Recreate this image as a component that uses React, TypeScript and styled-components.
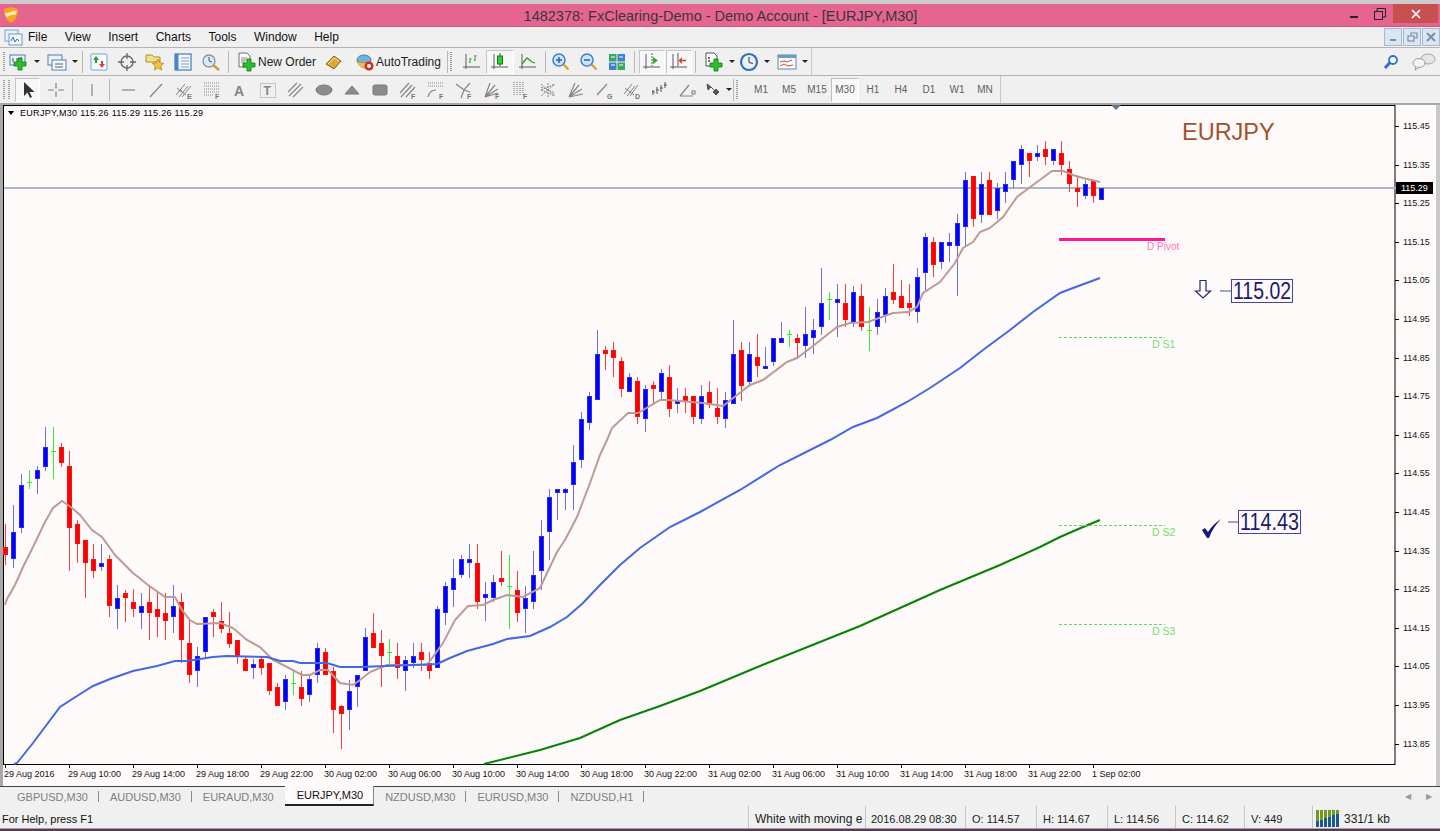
import React from "react";
import styled, { createGlobalStyle } from "styled-components";

const GlobalStyle = createGlobalStyle`
  html, body { margin: 0; padding: 0; background: #f0f0f0; overflow: hidden; }
  body { font-family: "Liberation Sans", Arial, sans-serif; font-size: 12px; color: #000; }
`;

const Window = styled.div`
  width: 1440px;
  height: 831px;
  display: flex;
  flex-direction: column;
  overflow: hidden;
`;
const TitleBar = styled.div`
  height: 22px;
  border-top: 4px solid #cccccc;
  border-bottom: 1px solid #c9577f;
  background: #e5658f;
  display: grid;
  grid-template-columns: 1fr auto 1fr;
  align-items: center;
  padding-left: 3px;
`;
const TitleText = styled.div`
  font-size: 14.5px;
  color: #3b3344;
  padding-top: 1px;
  margin-right: 2px;
`;
const WinControls = styled.div`
  justify-self: end;
  display: flex;
  align-items: flex-start;
  height: 22px;
  margin-right: 2px;
`;
const WinBtn = styled.div<{ $w: number; $close?: boolean }>`
  width: ${(p) => p.$w}px;
  height: 19px;
  background: ${(p) => (p.$close ? "#c75050" : "transparent")};
  display: flex;
  align-items: center;
  justify-content: center;
`;
const MenuBar = styled.div`
  height: 20px;
  display: flex;
  align-items: center;
  background: #f0f0f0;
  padding-left: 4px;
`;
const MenuItems = styled.div`
  display: flex;
  gap: 17.5px;
  margin-left: 4px;
  color: #111;
`;
const MdiGroup = styled.div`
  margin-left: auto;
  display: flex;
  gap: 1px;
`;
const MdiBtn = styled.div`
  width: 16px;
  height: 16px;
  border: 1px solid #a6bacb;
  background: #d9e7f4;
  display: flex;
  align-items: center;
  justify-content: center;
`;
const ToolRow = styled.div<{ $h: number }>`
  height: ${(p) => p.$h}px;
  box-sizing: border-box;
  border-top: 1px solid #b4b4b4;
  background: #f0f0f0;
  display: flex;
  align-items: center;
  padding-left: 3px;
  position: relative;
`;
const Grip = styled.div<{ $ml?: number; $mr?: number }>`
  width: 2px;
  height: 20px;
  flex: none;
  margin-left: ${(p) => p.$ml ?? 0}px;
  margin-right: ${(p) => p.$mr ?? 0}px;
  background: repeating-linear-gradient(to bottom, #9a9a9a 0 1px, #f0f0f0 1px 2px);
`;
const Sep = styled.div<{ $ml?: number; $mr?: number }>`
  width: 1px;
  height: 22px;
  background: #b8b8b8;
  margin-left: ${(p) => p.$ml ?? 0}px;
  margin-right: ${(p) => p.$mr ?? 0}px;
  flex: none;
`;
const Tool = styled.div<{ $w?: number; $ml?: number; $active?: boolean }>`
  width: ${(p) => p.$w ?? 28}px;
  height: 24px;
  box-sizing: border-box;
  margin-left: ${(p) => p.$ml ?? 0}px;
  flex: none;
  display: flex;
  align-items: center;
  justify-content: center;
  gap: 2px;
  font-size: 12px;
  color: #222;
  border: 1px solid ${(p) => (p.$active ? "#c4c4c4" : "transparent")};
  border-right-color: ${(p) => (p.$active ? "#ffffff" : "transparent")};
  border-bottom-color: ${(p) => (p.$active ? "#ffffff" : "transparent")};
  background: ${(p) => (p.$active ? "#f7f7f7" : "transparent")};
`;
const Caret = styled.span`
  width: 0;
  height: 0;
  margin-left: 3px;
  border-left: 3px solid transparent;
  border-right: 3px solid transparent;
  border-top: 3px solid #222;
`;
const RowEnd = styled.div<{ $at: number }>`
  position: absolute;
  left: ${(p) => p.$at}px;
  top: 0;
  bottom: 0;
  width: 1px;
  background: #c8c8c8;
`;
const RightTools = styled.div`
  margin-left: auto;
  display: flex;
  align-items: center;
  gap: 14px;
  margin-right: 4px;
`;
const Period = styled.div<{ $active?: boolean }>`
  width: 28px;
  height: 24px;
  flex: none;
  box-sizing: border-box;
  display: flex;
  align-items: center;
  justify-content: center;
  font-size: 10px;
  color: #606060;
  border: 1px solid ${(p) => (p.$active ? "#bcbcbc" : "transparent")};
  border-right-color: ${(p) => (p.$active ? "#fff" : "transparent")};
  border-bottom-color: ${(p) => (p.$active ? "#fff" : "transparent")};
  background: ${(p) => (p.$active ? "#f8f8f8" : "transparent")};
`;
const ChartPane = styled.div`
  height: 683px;
  flex: none;
  background: #fffafa;
  border-top: 2px solid #a8a8a8;
  box-sizing: border-box;
`;
const ChartSvg = styled.svg`
  display: block;
  font-family: "Liberation Sans", Arial, sans-serif;
`;
const IcoSvg = styled.svg`
  flex: none;
`;
const TabBar = styled.div`
  height: 20px;
  box-sizing: border-box;
  display: flex;
  align-items: stretch;
  padding-left: 6px;
  background: #f0f0f0;
  border-top: 1px solid #444;
`;
const Tab = styled.div<{ $active?: boolean; $sep?: boolean }>`
  display: flex;
  align-items: center;
  padding: ${(p) => (p.$active ? "0 10px 0 12px" : "0 11px")};
  font-size: 11px;
  color: ${(p) => (p.$active ? "#111" : "#7e7e7e")};
  background: ${(p) => (p.$active ? "#fffafa" : "transparent")};
  margin-top: ${(p) => (p.$active ? "-1px" : "0")};
  border-bottom: ${(p) => (p.$active ? "2px solid #222" : "none")};
  border-right: ${(p) => (p.$active ? "1px solid #888" : "none")};
  position: relative;
  ${(p) =>
    p.$sep &&
    `&::after { content: ""; position: absolute; right: 0; top: 4px; bottom: 4px; width: 1px; background: #8a8a8a; }`}
`;
const TabArrows = styled.div`
  margin-left: auto;
  display: flex;
  align-items: center;
  gap: 15px;
  padding-right: 8px;
  font-size: 8px;
  color: #9a9a9a;
`;
const StatusBar = styled.div`
  height: 22px;
  flex: none;
  display: flex;
  align-items: stretch;
  background: #f0f0f0;
  font-size: 11px;
  color: #222;
`;
const HelpText = styled.div`
  width: 748px;
  padding: 3px 0 0 2px;
  box-sizing: border-box;
  color: #111;
  display: flex;
  align-items: center;
`;
const Cell = styled.div<{ $w: number; $pad?: number; $fs?: number }>`
  width: ${(p) => p.$w}px;
  box-sizing: border-box;
  flex: none;
  display: flex;
  align-items: center;
  gap: 4px;
  padding-top: 3px;
  padding-left: ${(p) => p.$pad ?? 6}px;
  font-size: ${(p) => p.$fs ?? 11}px;
  border-left: 1px solid #c4c4c4;
  white-space: nowrap;
`;
const BottomEdge = styled.div`
  height: 3px;
  background: linear-gradient(to bottom, #d08fa6 0 1px, #4a4050 1px);
`;

// hi, body top, body bottom, lo (pixel rows), kind: b blue, r red, g green doji
type Candle = [number, number, number, number, "b" | "r" | "g"];
const candles: Candle[] = [
  [524, 547, 555, 565, "r"], [505, 532, 559, 568, "b"], [474, 485, 528, 533, "b"], [470, 482, 482, 489, "g"],
  [466, 470, 479, 494, "b"], [427, 447, 467, 471, "b"], [427, 451, 451, 479, "g"], [443, 447, 463, 467, "r"],
  [451, 466, 528, 571, "r"], [520, 524, 544, 563, "r"], [540, 540, 563, 598, "r"], [544, 559, 571, 578, "r"],
  [544, 563, 567, 571, "b"], [555, 559, 606, 617, "r"], [585, 598, 609, 629, "b"], [590, 593, 598, 622, "r"],
  [589, 602, 609, 617, "r"], [593, 606, 613, 629, "b"], [585, 602, 613, 640, "r"], [593, 609, 617, 637, "r"],
  [593, 613, 621, 640, "r"], [585, 606, 617, 633, "b"], [593, 602, 640, 663, "r"], [620, 643, 675, 683, "r"],
  [647, 656, 671, 687, "b"], [617, 617, 652, 657, "b"], [609, 612, 617, 637, "r"], [602, 621, 629, 633, "r"],
  [612, 633, 644, 648, "r"], [640, 640, 656, 664, "r"], [656, 659, 671, 671, "r"], [659, 664, 668, 679, "b"],
  [656, 659, 668, 675, "r"], [663, 663, 691, 695, "r"], [683, 687, 706, 706, "r"], [675, 679, 702, 710, "b"],
  [671, 683, 683, 695, "g"], [671, 687, 699, 706, "r"], [675, 679, 695, 702, "b"], [643, 648, 675, 683, "b"],
  [648, 652, 675, 675, "r"], [667, 671, 710, 733, "r"], [705, 706, 714, 749, "r"], [680, 691, 710, 730, "b"],
  [675, 675, 687, 707, "b"], [628, 637, 671, 671, "b"], [613, 633, 648, 648, "r"], [630, 643, 656, 687, "r"],
  [639, 652, 652, 664, "g"], [643, 656, 668, 679, "r"], [656, 660, 671, 691, "b"], [643, 656, 663, 668, "b"],
  [643, 652, 660, 671, "r"], [652, 663, 671, 679, "r"], [606, 609, 668, 668, "b"], [582, 586, 613, 625, "b"],
  [559, 578, 590, 607, "b"], [555, 559, 575, 578, "b"], [544, 559, 563, 578, "b"], [544, 563, 602, 609, "r"],
  [582, 594, 598, 621, "b"], [575, 582, 598, 602, "b"], [551, 578, 582, 586, "r"], [555, 586, 586, 629, "g"],
  [571, 590, 613, 622, "r"], [586, 598, 609, 633, "b"], [551, 575, 602, 609, "b"], [520, 536, 571, 590, "b"],
  [489, 497, 532, 560, "b"], [489, 489, 493, 520, "b"], [488, 489, 493, 510, "b"], [445, 462, 485, 510, "b"],
  [412, 419, 460, 468, "b"], [392, 396, 423, 430, "b"], [330, 354, 400, 400, "b"], [346, 350, 354, 370, "r"],
  [342, 350, 358, 377, "r"], [357, 361, 389, 397, "r"], [373, 377, 392, 392, "b"], [377, 381, 417, 424, "r"],
  [385, 389, 419, 432, "b"], [381, 385, 389, 405, "r"], [369, 373, 392, 400, "b"], [365, 377, 409, 417, "r"],
  [388, 400, 404, 413, "b"], [388, 396, 401, 413, "r"], [396, 396, 417, 424, "r"], [385, 396, 419, 424, "b"],
  [381, 392, 405, 408, "r"], [388, 408, 417, 424, "r"], [392, 400, 419, 428, "b"], [320, 354, 404, 404, "b"],
  [342, 350, 386, 401, "r"], [342, 354, 382, 386, "b"], [334, 357, 366, 377, "r"], [347, 366, 369, 369, "b"],
  [338, 338, 362, 366, "b"], [322, 338, 343, 343, "b"], [330, 334, 334, 347, "g"], [334, 338, 343, 358, "r"],
  [307, 334, 346, 358, "b"], [319, 330, 338, 354, "b"], [268, 303, 327, 335, "b"], [292, 299, 299, 320, "g"],
  [284, 299, 303, 337, "b"], [284, 303, 320, 327, "r"], [286, 292, 323, 327, "b"], [284, 296, 327, 331, "r"],
  [307, 330, 330, 351, "g"], [299, 312, 327, 335, "b"], [288, 296, 315, 323, "b"], [264, 292, 300, 304, "r"],
  [280, 296, 308, 308, "r"], [284, 303, 308, 316, "r"], [268, 277, 312, 323, "b"], [233, 237, 273, 292, "b"],
  [237, 242, 265, 277, "r"], [242, 242, 262, 269, "b"], [233, 242, 246, 262, "b"], [214, 223, 246, 296, "b"],
  [172, 180, 227, 247, "b"], [176, 176, 219, 227, "r"], [172, 184, 215, 223, "b"], [172, 180, 215, 215, "r"],
  [183, 188, 211, 219, "b"], [172, 184, 192, 203, "b"], [161, 161, 180, 188, "b"], [145, 149, 165, 184, "b"],
  [153, 153, 161, 177, "r"], [145, 153, 157, 161, "b"], [141, 149, 157, 165, "r"], [149, 149, 161, 165, "b"],
  [141, 153, 165, 175, "r"], [161, 169, 184, 192, "r"], [177, 188, 192, 207, "r"], [180, 184, 196, 199, "b"],
  [180, 180, 196, 203, "r"], [188, 188, 200, 200, "b"],
];

const brownMa = "5,605 7,599 15,585 23,567 33,547 45,522 53,508 62,501 72,508 80,515 92,530 102,537 115,555 133,573 148,585 165,597 175,597 182,610 190,620 197,624 220,623 233,628 247,640 260,647 273,660 287,667 302,675 310,675 320,670 328,670 340,683 353,685 360,680 370,672 387,665 427,665 443,643 455,620 468,606 483,605 493,600 507,595 523,597 540,588 557,552 565,540 577,517 590,483 600,455 607,440 612,428 628,413 638,413 660,400 668,400 703,403 723,406 750,385 763,380 787,362 797,358 813,346 837,327 850,323 868,322 893,313 908,312 917,307 923,293 940,282 955,263 963,248 973,242 980,232 990,228 1003,217 1017,197 1037,182 1052,171 1063,171 1073,175 1083,178 1100,182";
const blueMa = "14,764 17,763 33,743 60,707 77,696 93,686 110,679 133,671 157,666 175,661 187,661 213,657 227,656 267,657 280,661 293,661 300,663 327,663 340,667 360,667 437,664 450,658 467,651 493,644 507,639 530,636 550,627 567,617 583,603 600,585 620,565 640,548 670,527 700,512 740,490 780,465 830,440 853,427 877,418 907,402 930,388 960,368 983,350 1010,330 1033,312 1060,293 1073,288 1100,278";
const greenMa = "484,764 540,750 580,738 620,720 660,706 700,691 760,666 800,650 860,626 900,608 940,590 1000,565 1040,547 1060,537 1083,527 1100,520";

const dates = [
  "29 Aug 2016", "29 Aug 10:00", "29 Aug 14:00", "29 Aug 18:00", "29 Aug 22:00", "30 Aug 02:00",
  "30 Aug 06:00", "30 Aug 10:00", "30 Aug 14:00", "30 Aug 18:00", "30 Aug 22:00", "31 Aug 02:00",
  "31 Aug 06:00", "31 Aug 10:00", "31 Aug 14:00", "31 Aug 18:00", "31 Aug 22:00", "1 Sep 02:00",
];
const prices = Array.from({ length: 17 }, (_, i) => (115.45 - i * 0.1).toFixed(2));

const levels = [
  { y: 337.5, label: "D S1", tx: 1152, ty: 348 },
  { y: 525.5, label: "D S2", tx: 1152, ty: 536 },
  { y: 624.5, label: "D S3", tx: 1152, ty: 635 },
];

const FRAME_R = 1395;
const FRAME_B = 764;

function CandleMark({ c, x }: { c: Candle; x: number }) {
  const [hi, top, bot, lo, kind] = c;
  if (kind === "g") {
    return (
      <g fill="#33ee33">
        <rect x={x} y={hi} width={1} height={lo - hi} />
        <rect x={x - 2} y={top} width={5} height={1} />
      </g>
    );
  }
  const wick = kind === "b" ? "#7070dc" : "#ff3a3a";
  const edge = kind === "b" ? "#2a2af5" : "#ff1010";
  const fill = kind === "b" ? "#0000ff" : "#ff0000";
  return (
    <g>
      <rect x={x} y={hi} width={1} height={lo - hi} fill={wick} />
      <rect x={x - 2} y={top} width={5} height={Math.max(bot - top, 3)} fill={edge} />
      <rect x={x - 1} y={top + 1} width={3} height={Math.max(bot - top - 2, 1)} fill={fill} />
    </g>
  );
}

function Chart() {
  return (
    <ChartSvg width={1440} height={681} viewBox="0 105 1440 681">
      <rect x={0} y={105} width={3} height={681} fill="#a8a8a8" />
      <rect x={1436} y={105} width={4} height={681} fill="#c8c8c8" />
      <rect x={3.5} y={105.5} width={FRAME_R - 3.5} height={FRAME_B - 105} fill="none" stroke="#000" />

      <g shapeRendering="crispEdges">
        <rect x={4} y={187} width={1392} height={2} fill="#aeb4c8" />
        {candles.map((c, i) => (
          <CandleMark key={i} c={c} x={5 + i * 8} />
        ))}
      </g>

      <polyline points={brownMa} fill="none" stroke="#bd9a94" strokeWidth={2} />
      <polyline points={blueMa} fill="none" stroke="#4169e1" strokeWidth={2} />
      <polyline points={greenMa} fill="none" stroke="#068206" strokeWidth={2} />

      <path d="M8 111h6l-3 4z" fill="#000" />
      <text x={20} y={116} fontSize={9} fill="#000" textLength={183}>EURJPY,M30  115.26 115.29 115.26 115.29</text>
      <path d="M1111 105h10l-5 5z" fill="#5f7489" />
      <text x={1182} y={140} fontSize={23.5} fill="#a0522d">EURJPY</text>

      <rect x={1059} y={238} width={106} height={3} fill="#ff1493" />
      <text x={1147} y={250} fontSize={10} fill="#ff78b4">D Pivot</text>
      {levels.map((l) => (
        <g key={l.label}>
          <line x1={1059} x2={1165} y1={l.y} y2={l.y} stroke="#55dd55" strokeDasharray="3 2" />
          <text x={l.tx} y={l.ty} fontSize={10.5} fill="#6fe06f">{l.label}</text>
        </g>
      ))}

      <path d="M1200 280.5h6v10.5h4.5l-7.5 7-7.5-7h4.5z" fill="#fffafa" stroke="#1c2a6e" strokeWidth={1.2} />
      <line x1={1220} x2={1231} y1={291} y2={291} stroke="#4a4a90" />
      <rect x={1231.5} y={279.5} width={61} height={23} fill="none" stroke="#3f47a5" />
      <text x={1233} y={299} fontSize={23} fill="#191970" textLength={58} lengthAdjust="spacingAndGlyphs">115.02</text>

      <path d="M1202 530l3-2 3 4c3-5 7-9 13-13-5 5-9 11-12 19h-2z" fill="#191970" />
      <line x1={1228} x2={1238} y1={522} y2={522} stroke="#4a4a90" />
      <rect x={1238.5} y={510.5} width={62} height={23} fill="none" stroke="#3f47a5" />
      <text x={1240} y={530} fontSize={23} fill="#191970" textLength={59} lengthAdjust="spacingAndGlyphs">114.43</text>

      <g fontSize={9} fill="#111">
        {prices.map((p, i) => {
          const y = Math.round(126 + i * 38.6);
          return (
            <g key={p}>
              <rect x={FRAME_R} y={y} width={4} height={1} fill="#000" />
              <text x={1403} y={y + 3}>{p}</text>
            </g>
          );
        })}
        {dates.map((d, i) => {
          const x = 5 + i * 64;
          return (
            <g key={d}>
              <rect x={x} y={FRAME_B} width={1} height={4} fill="#000" />
              <text x={x - 1} y={777}>{d}</text>
            </g>
          );
        })}
      </g>
      <rect x={1396} y={182} width={37} height={12} fill="#000" />
      <text x={1401} y={191} fontSize={9} fill="#fff">115.29</text>
    </ChartSvg>
  );
}

const Ico = ({ w = 20, h = 20, children }: { w?: number; h?: number; children: React.ReactNode }) => (
  <IcoSvg width={w} height={h} viewBox={`0 0 ${w} ${h}`}>
    {children}
  </IcoSvg>
);

const Plus = ({ x, y }: { x: number; y: number }) => (
  <path
    d={`M${x} ${y - 6}h4v4h4v4h-4v4h-4v-4h-4v-4h4z`}
    fill="#29c229"
    stroke="#0c7a0c"
    strokeWidth={0.8}
  />
);

const Logo = () => (
  <Ico w={16} h={18}>
    <path d="M1 3l7-2 7 2c0 6-2 11-7 14C3 14 1 9 1 3z" fill="#f5a623" />
    <path d="M2 7c4 1 7-3 12-2-1 2-1 3-2 4-4-1-6 2-9 2z" fill="#ffe9b0" />
  </Ico>
);

const MenuIcon = () => (
  <Ico w={20} h={18}>
    <rect x={1} y={2} width={13} height={11} fill="#e4f0fb" stroke="#7fa4c8" />
    <rect x={5} y={6} width={13} height={11} fill="#f4f9ff" stroke="#6e97c0" />
    <path d="M7 13l2-4 2 5 2-3 2 2" fill="none" stroke="#3a6ea5" />
  </Ico>
);

const drawStroke = { fill: "none", stroke: "#858585", strokeWidth: 1.2 };
const SubF = ({ t = "F", x = 13 }: { t?: string; x?: number }) => (
  <text x={x} y={19} fontSize={7} fontWeight={700} fill="#777" fontFamily="Liberation Sans">{t}</text>
);

const drawIcons: React.ReactNode[] = [
  <path key="h" d="M4 10H17" {...drawStroke} />,
  <path key="t" d="M4 17L16 4" {...drawStroke} />,
  <g key="e">
    <path d="M2 15L11 4M5 17L14 6M8 17L17 6M3 8l9 7M4 12l4-2" {...drawStroke} strokeWidth={1} />
    <SubF t="E" />
  </g>,
  <g key="f">
    <path d="M2 3H17M2 6H17M2 9H17M2 12H17M2 15H12" {...drawStroke} strokeDasharray="1 1" />
    <SubF />
  </g>,
  <text key="a" x={4} y={16} fontSize={14} fontWeight={700} fill="#858585" fontFamily="Liberation Sans">A</text>,
  <g key="b">
    <rect x={2.5} y={3.5} width={15} height={14} fill="none" stroke="#999" strokeDasharray="1 1" />
    <text x={5.5} y={15} fontSize={12} fontWeight={700} fill="#858585" fontFamily="Liberation Sans">T</text>
  </g>,
  <path key="p" d="M2 12L11 3M3 16L15 4M7 17L17 7" {...drawStroke} />,
  <ellipse key="el" cx={10} cy={10} rx={8} ry={5} fill="#8c8c8c" stroke="#777" />,
  <path key="tr" d="M3 14L10 6L17 14Z" fill="#8c8c8c" stroke="#777" />,
  <rect key="re" x={3} y={5} width={14} height={10} rx={2} fill="#8c8c8c" stroke="#777" />,
  <g key="f2">
    <path d="M2 13L11 3M3 17L14 5M8 17L17 7" {...drawStroke} />
    <SubF />
  </g>,
  <g key="f3">
    <path d="M2 3H17M2 6H17" {...drawStroke} strokeDasharray="1 1" />
    <path d="M2 17c1-5 4-7 8-7" {...drawStroke} />
    <SubF />
  </g>,
  <g key="f4">
    <path d="M2 4l8 6 6-7M10 10l-3 8M10 10l6 2" {...drawStroke} />
    <SubF />
  </g>,
  <g key="f5">
    <path d="M3 17L8 3M3 17L13 5M3 17L16 9M3 17L16 13" {...drawStroke} />
    <SubF />
  </g>,
  <g key="f6">
    <path d="M4 2v13M7 2v13M10 2v13M13 2v13" {...drawStroke} strokeDasharray="1 1" />
    <SubF />
  </g>,
  <path key="x" d="M3 4l14 12M3 10l14-6M3 10l14 6M3 16L17 4M10 3v14M3 7l14 6" {...drawStroke} strokeWidth={1} strokeDasharray="2 1" />,
  <path key="fan" d="M3 17L9 3M3 17L13 5M3 17L16 9M3 17L17 14" {...drawStroke} />,
  <g key="g">
    <path d="M3 15L13 4" {...drawStroke} />
    <SubF t="G" />
  </g>,
  <g key="d">
    <path d="M2 14L10 4M5 16L13 6M8 16L16 5M3 8l9 7" {...drawStroke} strokeWidth={1} />
    <SubF t="D" />
  </g>,
  <path key="pf" d="M3 15v-5M2 12h3M7 14v-7M6 10h3M11 12V5M10 8h3M15 8V2M14 5h3" {...drawStroke} stroke="#555" strokeWidth={1} />,
  <g key="an">
    <path d="M2 16H15M2 16L11 5" {...drawStroke} />
    <rect x={14} y={11} width={3} height={3} fill="none" stroke="#777" />
  </g>,
];

const periods = ["M1", "M5", "M15", "M30", "H1", "H4", "D1", "W1", "MN"];
const tabs = ["GBPUSD,M30", "AUDUSD,M30", "EURAUD,M30", "EURJPY,M30", "NZDUSD,M30", "EURUSD,M30", "NZDUSD,H1"];

const axes = <path d="M4 2v15M1 15h17" fill="none" stroke="#5a5a5a" strokeWidth={1} />;

export default function App() {
  return (
    <Window>
      <GlobalStyle />
      <TitleBar>
        <Logo />
        <TitleText>1482378: FxClearing-Demo - Demo Account - [EURJPY,M30]</TitleText>
        <WinControls>
          <WinBtn $w={26}>
            <svg width={10} height={10}><rect x={1} y={7} width={8} height={2} fill="#2a2030" /></svg>
          </WinBtn>
          <WinBtn $w={26}>
            <svg width={12} height={12} fill="none" stroke="#2a2030">
              <rect x={0.5} y={3.5} width={8} height={8} />
              <path d="M3 3V.5h8.5V9H9" />
            </svg>
          </WinBtn>
          <WinBtn $w={45} $close>
            <svg width={10} height={10} stroke="#fff" strokeWidth={1.6}><path d="M1 1l8 8M9 1l-8 8" /></svg>
          </WinBtn>
        </WinControls>
      </TitleBar>

      <MenuBar>
        <MenuIcon />
        <MenuItems>
          {["File", "View", "Insert", "Charts", "Tools", "Window", "Help"].map((m) => (
            <span key={m}>{m}</span>
          ))}
        </MenuItems>
        <MdiGroup>
          <MdiBtn>
            <svg width={10} height={10}><rect x={2} y={7} width={6} height={2} fill="#7b8fa0" /></svg>
          </MdiBtn>
          <MdiBtn>
            <svg width={11} height={11} fill="none" stroke="#7b8fa0" strokeWidth={1.2}>
              <rect x={1} y={4} width={6} height={5} />
              <path d="M4 3V1h6v5H8" />
            </svg>
          </MdiBtn>
          <MdiBtn>
            <svg width={10} height={10} stroke="#7b8fa0" strokeWidth={2}><path d="M1 1l8 8M9 1l-8 8" /></svg>
          </MdiBtn>
        </MdiGroup>
      </MenuBar>

      <ToolRow $h={28}>
        <Grip />
        <Tool $w={35} $ml={2}>
          <Ico w={20} h={20}>
            <rect x={1} y={3} width={15} height={10} fill="#eaf3fb" stroke="#4f7fae" />
            <path d="M4 6v4M8 6v5M12 5v3" stroke="#444" />
            <Plus x={9} y={12} />
          </Ico>
          <Caret />
        </Tool>
        <Tool $w={35} $ml={3}>
          <Ico w={20} h={20}>
            <rect x={1} y={3} width={14} height={10} fill="#eaf3fb" stroke="#4f7fae" />
            <rect x={5} y={8} width={14} height={10} fill="#f7fbff" stroke="#4f7fae" />
            <path d="M8 12h8M8 15h8" stroke="#555" />
          </Ico>
          <Caret />
        </Tool>
        <Sep $ml={2} $mr={2} />
        <Tool>
          <Ico w={18} h={18}>
            <rect x={1} y={1} width={16} height={16} rx={1} fill="#f8fbff" stroke="#6fa3d6" />
            <path d="M6 3l3 4H7v3H5V7H3z" fill="#26a326" />
            <path d="M12 15l-3-4h2V8h2v3h2z" fill="#d8452c" />
          </Ico>
        </Tool>
        <Tool>
          <Ico w={20} h={20}>
            <circle cx={10} cy={10} r={6} fill="none" stroke="#666" strokeWidth={1.3} />
            <path d="M10 1v6M10 13v6M1 10h6M13 10h6" stroke="#666" strokeWidth={1.3} />
          </Ico>
        </Tool>
        <Tool>
          <Ico w={20} h={20}>
            <path d="M1 3h6l2 2h6v5H1z" fill="#f6dc8e" stroke="#b08a35" />
            <path d="M13 7l1.8 3.8 4 .5-3 2.7.9 4-3.7-2-3.7 2 .9-4-3-2.7 4-.5z" fill="#f4c430" stroke="#a98112" strokeWidth={0.7} />
          </Ico>
        </Tool>
        <Tool>
          <Ico w={18} h={18}>
            <rect x={1} y={1} width={16} height={16} fill="#f4f9ff" stroke="#4a86c5" strokeWidth={1.3} />
            <rect x={1} y={1} width={3.5} height={16} fill="#4a86c5" />
            <path d="M7 5h8M7 8h8M7 11h8M7 14h8" stroke="#7a9cc0" />
          </Ico>
        </Tool>
        <Tool>
          <Ico w={20} h={20}>
            <circle cx={8} cy={9} r={6} fill="#dde9f5" stroke="#7e97b2" strokeWidth={1.3} />
            <path d="M8 5v4l3 1" fill="none" stroke="#555" />
            <path d="M12 13l6 5" stroke="#c89b3c" strokeWidth={2.4} />
          </Ico>
        </Tool>
        <Sep $ml={3} $mr={3} />
        <Tool $w={88}>
          <Ico w={20} h={20}>
            <path d="M3 1h8l3 3v11H3z" fill="#fbfbfb" stroke="#707070" />
            <path d="M5 6h6M5 8h6M5 10h4" stroke="#888" />
            <Plus x={11} y={13} />
          </Ico>
          <span>New Order</span>
        </Tool>
        <Tool>
          <Ico w={20} h={20}>
            <path d="M2 12l8-8 7 5-7 8z" fill="#dca73a" stroke="#8a6415" />
            <path d="M4 12l6-6 5 3" fill="none" stroke="#f8e2a2" />
          </Ico>
        </Tool>
        <Tool $w={91} $ml={5}>
          <Ico w={18} h={20}>
            <ellipse cx={8} cy={8} rx={7} ry={5} fill="#6fb2dc" stroke="#4a7fa6" />
            <path d="M1 9c2 5 5 7 8 7l3-6c-4 1-8 1-11-1z" fill="#efc24a" stroke="#a57f1a" strokeWidth={0.6} />
            <circle cx={13} cy={14} r={4.5} fill="#d22a1d" />
            <circle cx={13} cy={14} r={2} fill="#fff" />
          </Ico>
          <span>AutoTrading</span>
        </Tool>
        <Sep $ml={3} />
        <Grip $ml={2} />
        <Tool $ml={6}>
          <Ico>
            {axes}
            <path d="M8 11V6M7 10h1M8 7h1.5M13 9V3M12 8h1M13 4h1.5" stroke="#2e9b2e" fill="none" />
          </Ico>
        </Tool>
        <Tool $active>
          <Ico>
            {axes}
            <path d="M10 1v13" stroke="#444" />
            <rect x={7.5} y={4} width={5} height={8} fill="#30d030" stroke="#177a17" />
          </Ico>
        </Tool>
        <Tool>
          <Ico>
            {axes}
            <path d="M4 12l5-6 5 4 3 1" fill="none" stroke="#2e9b2e" strokeWidth={1.3} />
          </Ico>
        </Tool>
        <Sep $ml={3} />
        <Tool $ml={1}>
          <Ico>
            <circle cx={8} cy={8} r={6} fill="#cfe4fa" stroke="#3f7fd0" strokeWidth={1.5} />
            <path d="M5 8h6M8 5v6" stroke="#2a62b0" strokeWidth={1.5} />
            <path d="M12.5 12.5l5 5" stroke="#d8a32e" strokeWidth={2.4} />
          </Ico>
        </Tool>
        <Tool>
          <Ico>
            <circle cx={8} cy={8} r={6} fill="#cfe4fa" stroke="#3f7fd0" strokeWidth={1.5} />
            <path d="M5 8h6" stroke="#2a62b0" strokeWidth={1.5} />
            <path d="M12.5 12.5l5 5" stroke="#d8a32e" strokeWidth={2.4} />
          </Ico>
        </Tool>
        <Tool>
          <Ico w={18} h={18}>
            <rect x={1} y={1} width={7.5} height={7.5} fill="#38a85a" />
            <rect x={9.5} y={1} width={7.5} height={7.5} fill="#3d7fd8" />
            <rect x={1} y={9.5} width={7.5} height={7.5} fill="#3d7fd8" />
            <rect x={9.5} y={9.5} width={7.5} height={7.5} fill="#38a85a" />
            <path d="M3 4h4M3 12h4M11 4h4M11 12h4" stroke="#fff" strokeWidth={1.2} />
          </Ico>
        </Tool>
        <Sep $ml={3} />
        <Tool $w={26} $ml={4} $active>
          <Ico>
            {axes}
            <path d="M10 1v13" stroke="#555" strokeDasharray="2 1" />
            <path d="M11 5l5 3.5-5 3.5z" fill="#27b027" />
          </Ico>
        </Tool>
        <Tool $w={26} $ml={1} $active>
          <Ico>
            {axes}
            <path d="M9 1v13" stroke="#555" />
            <path d="M11 8.5h6M13 6l-2.5 2.5L13 11" fill="none" stroke="#c8401f" strokeWidth={1.4} />
          </Ico>
        </Tool>
        <Sep $ml={3} />
        <Tool $w={34} $ml={6}>
          <Ico w={20} h={20}>
            <path d="M2 1h8l3 3v10H2z" fill="#fafafa" stroke="#555" />
            <path d="M4 6h2M4 9h2" stroke="#444" strokeWidth={1.5} />
            <Plus x={10} y={13} />
          </Ico>
          <Caret />
        </Tool>
        <Tool $w={36}>
          <Ico w={20} h={20}>
            <circle cx={10} cy={10} r={8} fill="#e7f2fb" stroke="#2b6fb5" strokeWidth={2.2} />
            <path d="M10 5v5.5l4 1" fill="none" stroke="#333" />
          </Ico>
          <Caret />
        </Tool>
        <Tool $w={38} $ml={1}>
          <Ico w={20} h={18}>
            <rect x={1} y={2} width={18} height={14} fill="#fbfdff" stroke="#5b86ad" />
            <rect x={1} y={2} width={18} height={3} fill="#6d9bc3" />
            <path d="M3 9l4-1 3 1 5-2M3 13l4-2 4 2 5-1" fill="none" stroke="#d04a3a" />
          </Ico>
          <Caret />
        </Tool>
        <RowEnd $at={811} />
        <RightTools>
          <Ico w={15} h={16}>
            <circle cx={10} cy={6} r={4} fill="#eef5fd" stroke="#2f6fd0" strokeWidth={1.8} />
            <path d="M2 14l5-5.5" stroke="#2f6fd0" strokeWidth={3} />
          </Ico>
          <Ico w={24} h={18}>
            <ellipse cx={16} cy={6} rx={7} ry={5} fill="#e6e6e6" stroke="#a4a4a4" />
            <ellipse cx={7} cy={10} rx={6} ry={4.5} fill="#f4f4f4" stroke="#9a9a9a" />
            <path d="M4 14l-1 3 4-2.5" fill="#f4f4f4" stroke="#9a9a9a" />
          </Ico>
        </RightTools>
      </ToolRow>

      <ToolRow $h={28}>
        <Grip />
        <Grip $ml={3} />
        <Tool $w={25} $ml={5} $active>
          <Ico>
            <path d="M6 2v14l3.5-3.5 2.500 5.500 2-1-2.500-5h5z" fill="#333" />
          </Ico>
        </Tool>
        <Tool $ml={2}>
          <Ico>
            <path d="M10 3v5.5M10 11.5V17M2 10h6M12 10h6" fill="none" stroke="#808080" strokeWidth={1.2} />
          </Ico>
        </Tool>
        <Sep $ml={2} />
        <Tool $ml={5}>
          <Ico><path d="M10 4V16" {...drawStroke} /></Ico>
        </Tool>
        <Sep $ml={3} $mr={4} />
        {drawIcons.map((ic, i) => (
          <Tool key={i}>
            <Ico>{ic}</Ico>
          </Tool>
        ))}
        <Tool $w={32} $ml={-1}>
          <Ico w={18} h={18}>
            <path d="M4 3l4 3-3 3zM13 8l3 3-3 3-3-3zM8 6l4 4" fill="#555" stroke="#555" />
          </Ico>
          <Caret />
        </Tool>
        <Sep />
        <Grip $ml={2} $mr={9} />
        {periods.map((p) => (
          <Period key={p} $active={p === "M30"}>{p}</Period>
        ))}
        <RowEnd $at={1000} />
      </ToolRow>

      <ChartPane>
        <Chart />
      </ChartPane>

      <TabBar>
        {tabs.map((t, i) => (
          <Tab key={t} $active={t === "EURJPY,M30"} $sep={i !== 2 && i !== 3}>{t}</Tab>
        ))}
        <TabArrows>
          <span>◀</span>
          <span>▶</span>
        </TabArrows>
      </TabBar>

      <StatusBar>
        <HelpText>For Help, press F1</HelpText>
        <Cell $w={117} $fs={12}>White with moving e</Cell>
        <Cell $w={100} $pad={5}>2016.08.29 08:30</Cell>
        <Cell $w={71}>O: 114.57</Cell>
        <Cell $w={71}>H: 114.67</Cell>
        <Cell $w={68}>L: 114.56</Cell>
        <Cell $w={69}>C: 114.62</Cell>
        <Cell $w={68}>V: 449</Cell>
        <Cell $w={128} $pad={3} $fs={12}>
          <svg width={24} height={17}>
            {[0, 1, 2, 3, 4, 5].map((i) => (
              <g key={i}>
                <rect x={i * 4} y={0} width={3} height={11 - i * 1.5} fill="#6e9a1e" />
                <rect x={i * 4} y={11 - i * 1.5} width={3} height={6 + i * 1.5} fill="#1c5a8c" />
              </g>
            ))}
          </svg>
          331/1 kb
        </Cell>
      </StatusBar>
      <BottomEdge />
    </Window>
  );
}
